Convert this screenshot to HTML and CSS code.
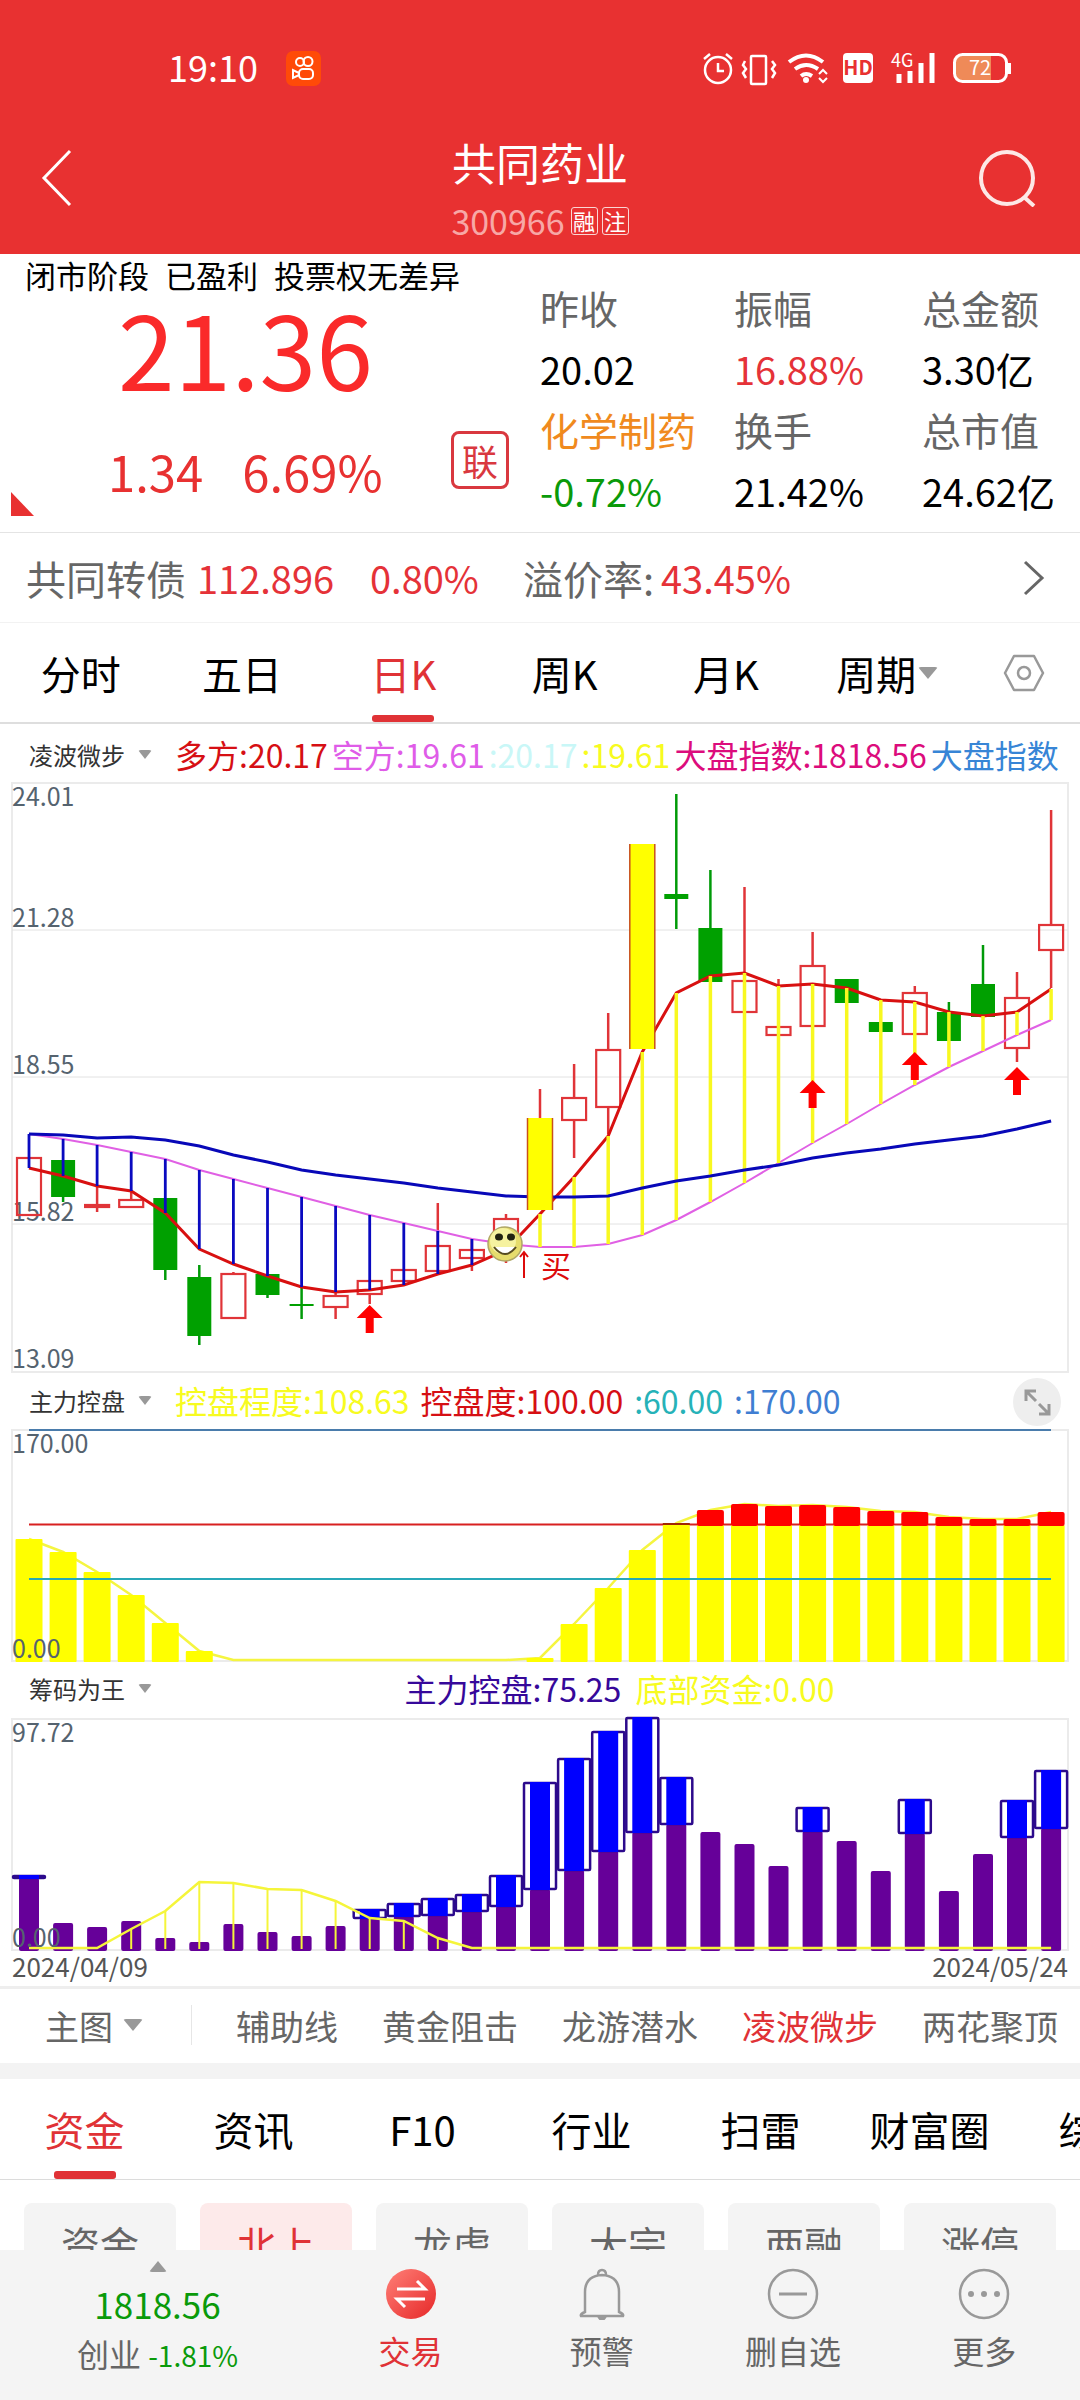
FILE: index.html
```html
<!DOCTYPE html>
<html lang="zh-CN">
<head>
<meta charset="utf-8">
<meta name="viewport" content="width=device-width">
<title>共同药业 300966</title>
<link rel="stylesheet" href="styles.css">
</head>
<body>
<div class="app">
  <header class="top">
    <div class="status">
      <span class="clock">19:10</span>
      <svg class="app-icon" width="35" height="35" viewBox="0 0 35 35" fill="none" stroke="#fff" stroke-width="2">
        <rect width="35" height="35" rx="7" fill="#ff4a08" stroke="none"/>
        <circle cx="14" cy="11" r="4"/><circle cx="22" cy="10.500" r="4.500"/>
        <rect x="13" y="18" width="14" height="10" rx="4"/><path d="M13 22L7 19v8l6-3"/>
      </svg>
      <span class="spacer"></span>
      <svg class="status-icons" width="310" height="34" viewBox="702 51 310 34" fill="none" stroke="#fff" stroke-width="2.500">
        <circle cx="718" cy="70" r="13"/><path d="M718 63v8h6M704 59l6-5M732 59l-6-5"/>
        <rect x="751" y="56" width="15" height="28" rx="1"/>
        <path d="M745 61l-2 4 3 4-3 4 3 5M772 61l3 4-3 4 3 4-3 5"/>
        <g stroke-width="4"><path d="M789 62q17-13 34 0M795 69q11-8 23 0M801 76q5-4 11 0"/></g>
        <circle cx="806" cy="80" r="3" fill="#fff" stroke="none"/>
        <path d="M819 74l4-4 4 4M819 78l4 4 4-4" stroke-width="2"/>
        <rect x="843" y="53" width="30" height="30" rx="4" fill="#fff" stroke="none"/>
        <text x="858" y="75" class="hd">HD</text>
        <text x="891" y="67" class="net">4G</text>
        <path d="M899 74v9M910 71v12M921 63v20M932 53v30" stroke-width="5"/>
        <path d="M961 56h30v25h-30q-6 0-6-6v-13q0-6 6-6z" fill="#ef8a58" stroke="none"/>
        <rect x="954.500" y="54.500" width="52" height="27" rx="8" stroke-width="3"/>
        <path d="M1009.500 63v11" stroke-width="3"/>
        <text x="969" y="75" class="bat">72</text>
      </svg>
    </div>
    <div class="title-bar">
      <button class="icon-btn" aria-label="返回"><svg width="32" height="58" viewBox="0 0 32 58" fill="none" stroke="#fff" stroke-width="3"><path d="M29 2L3 29l26 27"/></svg></button>
      <div class="titles">
        <h1>共同药业</h1>
        <p><span>300966</span><i>融</i><i>注</i></p>
      </div>
      <button class="icon-btn" aria-label="搜索"><svg width="60" height="58" viewBox="0 0 60 58" fill="none" stroke="#fde8e6" stroke-width="4"><circle cx="31" cy="29" r="26"/><path d="M48 48l10 9"/></svg></button>
    </div>
  </header>

  <main>
    <section class="quote">
      <div class="quote-main">
        <div class="phase"><span>闭市阶段</span><span>已盈利</span><span>投票权无差异</span></div>
        <div class="price">21.36</div>
        <div class="change"><span>1.34</span><span>6.69%</span><button class="link-badge">联</button></div>
        <span class="corner"></span>
      </div>
      <dl class="stats">
        <div><dt>昨收</dt><dd>20.02</dd></div>
        <div><dt>振幅</dt><dd class="up">16.88%</dd></div>
        <div><dt>总金额</dt><dd>3.30亿</dd></div>
        <div><dt class="sector">化学制药</dt><dd class="down">-0.72%</dd></div>
        <div><dt>换手</dt><dd>21.42%</dd></div>
        <div><dt>总市值</dt><dd>24.62亿</dd></div>
      </dl>
    </section>

    <a class="bond" href="#bond">
      <span>共同转债</span><b>112.896</b><b>0.80%</b><span>溢价率:</span><b>43.45%</b>
      <svg width="24" height="36" viewBox="0 0 24 36" fill="none" stroke="#666" stroke-width="3"><path d="M3 2l17 16L3 34"/></svg>
    </a>

    <nav class="periods">
      <button>分时</button><button>五日</button><button class="active">日K</button><button>周K</button><button>月K</button>
      <button>周期<span class="caret"></span></button>
      <button class="settings" aria-label="图表设置"><svg width="42" height="38" viewBox="0 0 42 38" fill="none" stroke="#999" stroke-width="2.500"><path d="M11 2h20l9 17-9 17H11L2 19z" stroke-linejoin="round"/><circle cx="21" cy="19" r="6"/></svg></button>
    </nav>

    <section class="charts">
      <div class="legend first">
        <button class="indicator">凌波微步<span class="caret small"></span></button>
        <div class="values tight"><span class="c-red">多方:20.17</span><span class="c-violet">空方:19.61</span><span class="c-pale">:20.17</span><span class="c-yellow">:19.61</span><span class="c-pink">大盘指数:1818.56</span><span class="c-blue">大盘指数</span></div>
      </div>
      <svg class="chart" id="candles" viewBox="0 0 1080 596" role="img" aria-label="日K线图"></svg>
      <div class="legend">
        <button class="indicator">主力控盘<span class="caret small"></span></button>
        <div class="values"><span class="c-yellow">控盘程度:108.63</span><span class="c-red">控盘度:100.00</span><span class="c-teal">:60.00</span><span class="c-steel">:170.00</span></div>
        <button class="expand" aria-label="全屏"><svg width="28" height="28" viewBox="0 0 28 28" fill="none" stroke="#999" stroke-width="3"><path d="M3 13V3h10M3 3l10 10M26 16v10H16M26 26L16 16"/></svg></button>
      </div>
      <svg class="chart" id="control" viewBox="0 0 1080 236" role="img" aria-label="主力控盘"></svg>
      <div class="legend">
        <button class="indicator">筹码为王<span class="caret small"></span></button>
        <div class="values centered"><span class="c-indigo">主力控盘:75.25</span><span class="c-yellow">底部资金:0.00</span></div>
      </div>
      <svg class="chart" id="chips" viewBox="0 0 1080 236" role="img" aria-label="筹码为王"></svg>
      <div class="dates"><span>2024/04/09</span><span>2024/05/24</span></div>
    </section>

    <nav class="overlays">
      <button class="menu">主图<span class="caret"></span></button>
      <button>辅助线</button><button>黄金阻击</button><button>龙游潜水</button><button class="active">凌波微步</button><button>两花聚顶</button>
    </nav>

    <nav class="sections">
      <button class="active">资金</button><button>资讯</button><button>F10</button><button>行业</button><button>扫雷</button><button>财富圈</button><button>综合</button>
    </nav>

    <div class="pills">
      <button>资金</button><button class="active">北上</button><button>龙虎</button><button>大宗</button><button>两融</button><button>涨停</button>
    </div>
  </main>

  <footer class="dock">
    <a class="index" href="#index"><span class="caret up-caret"></span><span class="idx-value">1818.56</span><span class="idx-change">创业 <em>-1.81%</em></span></a>
    <button class="trade"><svg width="52" height="52" viewBox="0 0 52 52" fill="none" stroke="#fff" stroke-width="3"><defs><linearGradient id="g" x1="0" y1="0" x2="1" y2="1"><stop offset="0" stop-color="#ff8078"/><stop offset="1" stop-color="#e62828"/></linearGradient></defs><circle cx="26" cy="26" r="25" fill="url(#g)" stroke="none"/><path d="M12 21h28l-8-8M40 31H12l8 8"/></svg>交易</button>
    <button><svg width="52" height="52" viewBox="0 0 52 52" fill="none" stroke="#999" stroke-width="2.500"><path d="M9 44q-5 2-4 4h42q1-2-4-4V24q0-16-17-17Q9 8 9 24z"/><path d="M22 7q0-5 4-5t4 5"/><path d="M23 49.500h6q-1 2-3 2t-3-2z" fill="#999"/></svg>预警</button>
    <button><svg width="52" height="52" viewBox="0 0 52 52" fill="none" stroke="#999" stroke-width="2.500"><circle cx="26" cy="26" r="24"/><path d="M12 26h28" stroke-width="3"/></svg>删自选</button>
    <button><svg width="52" height="52" viewBox="0 0 52 52" fill="none" stroke="#999" stroke-width="2.500"><circle cx="26" cy="26" r="24"/><g fill="#999" stroke="none"><circle cx="13" cy="26" r="3"/><circle cx="26" cy="26" r="3"/><circle cx="39" cy="26" r="3"/></g></svg>更多</button>
  </footer>
</div>
<script src="charts.js"></script>
</body>
</html>
```
FILE: styles.css
```css
* { box-sizing: border-box; margin: 0; padding: 0; }
body { background: #fff; color: #000; font-family: "Noto Sans CJK SC", "Noto Sans", sans-serif; }
button { border: 0; background: none; font: inherit; color: inherit; white-space: nowrap; }
a { color: inherit; text-decoration: none; }
i, em { font-style: normal; }
b { font-weight: 400; }
svg { display: block; flex: none; }

.app { display: flex; flex-direction: column; height: 100vh; overflow: hidden; }
main { flex: 1; min-height: 0; overflow: hidden; }

.top { background: #e83131; color: #fff; height: 254px; padding-top: 46px; flex: none; }
.status { display: flex; align-items: center; height: 44px; padding: 0 68px 0 168px; }
.status-icons { overflow: visible; }
.clock { font-size: 36px; line-height: 40px; padding-bottom: 4px; }
.app-icon { margin-left: 28px; }
.spacer { flex: 1; }
.hd { fill: #e83131; stroke: none; font-size: 20px; font-weight: 700; text-anchor: middle; }
.net { fill: #fff; stroke: none; font-size: 18px; }
.bat { fill: #fff; stroke: none; font-size: 20px; }
.title-bar { display: grid; grid-template-columns: 100px 1fr 100px; align-items: start; padding-top: 44px; }
.title-bar .icon-btn { display: flex; justify-content: center; padding-top: 15px; }
.title-bar .icon-btn:first-child { padding-left: 14px; }
.title-bar .icon-btn:last-child { padding-right: 48px; }
.titles { text-align: center; }
h1 { font-size: 44px; line-height: 56px; font-weight: 400; }
.titles p { display: flex; justify-content: center; align-items: center; gap: 4px; font-size: 34px; line-height: 62px; }
.titles p span { color: #f7a8a6; padding-right: 2px; }
.titles i { width: 27px; height: 28px; border: 1px solid #fbd5d3; border-radius: 3px; font-size: 22px; line-height: 25px; }

.quote { display: grid; grid-template-columns: 540px 1fr; height: 279px; border-bottom: 1px solid #e4e4e4; }
.quote-main { position: relative; color: #e83131; }
.phase { display: flex; gap: 16px; padding-left: 25px; color: #000; font-size: 31px; line-height: 41px; }
.price { padding-left: 118px; font-size: 102px; line-height: 104px; color: #fa2a2a; }
.change { display: flex; align-items: center; gap: 39px; height: 133px; padding: 10px 31px 0 108px; font-size: 49px; line-height: 60px; }
.link-badge { align-self: flex-start; margin: 22px 0 0 auto; width: 58px; height: 58px; border: 3px solid #d9383f; border-radius: 8px; color: #d9383f; font-size: 36px; line-height: 50px; }
.corner { position: absolute; left: 11px; bottom: 16px; border-left: 23px solid #e83131; border-top: 24px solid transparent; }
.stats { display: grid; grid-template-columns: 194px 188px 1fr; align-content: start; padding-top: 23px; font-size: 38px; line-height: 61px; white-space: nowrap; }
.stats dt { color: #666; font-size: 39px; }
.stats .sector { color: #f08a1e; }
.stats .up { color: #e53238; }
.stats .down { color: #0a9a0a; }

.bond { display: grid; grid-template-columns: 171px 173px 153px 138px 1fr 24px; align-items: center; height: 90px; padding: 0 34px 0 26px; border-bottom: 1px solid #f2f2f2; color: #666; font-size: 40px; white-space: nowrap; }
.bond b { color: #e53238; font-size: 38px; }

.periods { display: flex; height: 101px; border-bottom: 2px solid #dedede; font-size: 40px; }
.periods button { flex: 1; position: relative; display: flex; align-items: center; justify-content: center; }
.periods .settings { flex: 0 0 112px; }
.active { color: #e03236; }
.periods .active::after, .sections .active::after { content: ""; position: absolute; left: 50%; bottom: 0; width: 62px; height: 7px; margin-left: -31px; border-radius: 3px; background: #e03236; }
.caret { display: inline-block; margin-left: 2px; border: 10px solid transparent; border-top: 12px solid #999; border-bottom: 0; border-radius: 3px; }
.caret.small { margin-left: 13px; border-width: 9px 7px 0; }

.legend { display: flex; align-items: center; height: 52px; }
.legend.first { height: 56px; padding-top: 8px; }
.indicator { flex: none; display: flex; align-items: center; width: 175px; padding: 0 0 3px 29px; font-size: 24px; color: #333; }
.values { flex: 1; display: flex; gap: 11px; padding-bottom: 4px; font-size: 32px; line-height: 44px; white-space: nowrap; overflow: hidden; }
.values.tight { gap: 4px; }
.values.centered { justify-content: center; gap: 14px; padding-right: 16px; }
.c-red { color: #d60f14; }
.c-violet { color: #df5ce8; }
.c-pale { color: #c9f7f7; }
.c-yellow { color: #f7fb20; }
.c-pink { color: #dc0c7c; }
.c-blue { color: #3785d6; }
.c-teal { color: #26b2b8; }
.c-steel { color: #3f7ed2; }
.c-indigo { color: #36089a; }
.expand { flex: none; display: flex; align-items: center; justify-content: center; width: 48px; height: 48px; margin-right: 19px; border-radius: 50%; background: #eee; }
.chart { width: 100%; height: auto; }
.axis { font-size: 25px; fill: #55636f; }
.signal { font-size: 30px; fill: #dd0b0b; }
.dates { display: flex; justify-content: space-between; height: 34px; padding: 0 12px; font-size: 26px; line-height: 28px; color: #555; }

.overlays { display: flex; justify-content: space-between; align-items: center; height: 77px; padding: 0 22px 2px 45px; border-top: 3px solid #eee; font-size: 34px; color: #666; }
.overlays .menu { width: 147px; height: 40px; display: flex; align-items: center; border-right: 1px solid #e6e6e6; }
.overlays .menu .caret { margin-left: 10px; }
.overlays .active { color: #e03236; }

.sections { display: flex; height: 117px; border-top: 16px solid #f3f3f3; border-bottom: 1px solid #dcdcdc; font-size: 40px; overflow: hidden; }
.sections button { flex: 0 0 169px; position: relative; }
.sections .active::after { height: 8px; }
.pills { display: grid; grid-template-columns: repeat(6, 1fr); gap: 24px; padding: 23px 24px; font-size: 39px; color: #666; }
.pills button { height: 84px; padding-bottom: 4px; border-radius: 8px; background: #f4f4f4; }
.pills .active { background: #fdeaea; }

.dock { flex: none; display: grid; grid-template-columns: 315px repeat(4, 1fr); height: 150px; background: #f4f4f4; color: #666; font-size: 32px; }
.dock button { display: flex; flex-direction: column; align-items: center; gap: 10px; padding-top: 18px; line-height: 40px; }
.dock .trade { color: #e03236; }
.index { display: flex; flex-direction: column; align-items: center; padding-top: 11px; }
.up-caret { margin: 0; border: 9px solid transparent; border-top: 0; border-bottom: 11px solid #999; }
.idx-value { font-size: 35px; line-height: 44px; margin-top: 10px; color: #0a9a0a; }
.idx-change { line-height: 40px; margin-top: 7px; }
.idx-change em { color: #0a9a0a; font-size: 28px; }
```
FILE: charts.js
```js
// All series hold 31 trading days; vertical values are in viewBox units.
const DAYS = 31;
const xAt = i => 29 + i * 34.07;
const line = (pts, color, w) =>
  `<polyline fill="none" stroke="${color}" stroke-width="${w}" points="${pts.map((y, i) => xAt(i).toFixed(1) + ',' + y).join(' ')}"/>`;
const rect = (x, y, w, h, attrs) => `<rect x="${x.toFixed(1)}" y="${y}" width="${w}" height="${h}" ${attrs}/>`;
const seg = (x, y1, y2, color, w) => `<path d="M${x.toFixed(1)} ${y1}V${y2}" stroke="${color}" stroke-width="${w}"/>`;
const label = (y, text) => `<text class="axis" x="12" y="${y}">${text}</text>`;
const frame = (y, h) => rect(12, y, 1056, h, 'fill="none" stroke="#ebebeb" stroke-width="2"');

// [kind, high, body top, body bottom, low]
const candles = [
  ['r', 378, 378, 435, 436], ['g', 380, 380, 417, 422], ['r', 406, 425, 427, 432], ['r', 412, 420, 427, 428],
  ['g', 418, 418, 490, 500], ['g', 485, 497, 556, 565], ['r', 492, 494, 538, 538], ['g', 494, 494, 515, 518],
  ['g', 507, 524, 526, 539], ['r', 512, 516, 527, 539], ['r', 501, 501, 514, 524], ['r', 490, 490, 501, 505],
  ['r', 423, 466, 491, 491], ['r', 459, 470, 478, 491], ['r', 434, 439, 465, 483], ['y', 309, 338, 430, 430],
  ['r', 284, 318, 340, 378], ['r', 233, 270, 327, 354], ['y', 64, 64, 269, 269], ['g', 14, 114, 119, 149],
  ['g', 90, 148, 202, 202], ['r', 107, 201, 232, 232], ['r', 199, 247, 255, 255], ['r', 152, 186, 246, 246],
  ['g', 199, 199, 223, 223], ['g', 242, 242, 252, 252], ['r', 206, 213, 254, 254], ['g', 222, 232, 261, 261],
  ['g', 165, 204, 237, 237], ['r', 192, 218, 268, 282], ['r', 30, 145, 170, 208]
];
const fast = [388,396,406,411,433,469,484,496,507,512,510,505,494,485,470,434,397,356,272,213,196,193,206,204,208,220,222,232,236,232,209];
const slow = [354,359,365,372,379,390,399,408,417,426,435,443,451,459,464,467,467,464,455,440,422,403,383,363,344,324,305,287,271,255,240];
const market = [354,355,358,357,360,366,375,382,390,395,399,403,408,412,416,417,417,416,408,401,396,390,385,378,373,369,364,360,356,349,341];

function drawCandles() {
  let s = frame(3, 589);
  [150, 297, 444].forEach(y => { s += `<path d="M12 ${y}H1068" stroke="#e2e2e2" stroke-width="1"/>`; });
  [[26, '24.01'], [147, '21.28'], [294, '18.55'], [441, '15.82'], [588, '13.09']].forEach(a => { s += label(...a); });
  candles.forEach(([kind, high, top, bottom, low], i) => {
    const x = xAt(i);
    const color = kind === 'g' ? '#009a08' : '#e03438';
    s += seg(x, high, top, color, 2.5) + seg(x, bottom, low, color, 2.5);
    if (kind === 'g') s += rect(x - 12, top, 24, bottom - top, 'fill="#00a000"');
    else if (kind === 'r') s += rect(x - 12, top, 24, bottom - top, 'fill="none" stroke="#e03438" stroke-width="2.2"');
  });
  s += line(slow, '#e060e4', 2) + line(fast, '#d81010', 3);
  for (let i = 0; i < DAYS; i++) {
    if (i < 14) s += seg(xAt(i), slow[i], fast[i], '#0a0ac0', 2.8);
    if (i > 14) s += seg(xAt(i), fast[i], slow[i], '#f8f820', 3.5);
  }
  s += line(market, '#0808b8', 3);
  candles.forEach(([kind, , top, bottom], i) => {
    if (kind === 'y') s += rect(xAt(i) - 12.5, top, 25, bottom - top, 'fill="#ffff00"')
      + seg(xAt(i) - 12.5, top, bottom, '#c8501c', 1.5) + seg(xAt(i) + 12.5, top, bottom, '#c8501c', 1.5);
  });
  [[10, 525], [23, 300], [26, 272], [29, 287]].forEach(([i, y]) => {
    s += `<path fill="#ff0000" d="M${xAt(i).toFixed(1)} ${y}l13 13h-9v15h-8v-15h-9z"/>`;
  });
  s += '<path d="M524 498V472M520 477l4-5 4 5" fill="none" stroke="#dd0b0b" stroke-width="2"/>';
  s += '<text class="signal" x="541" y="497">买</text>';
  s += '<circle cx="505" cy="464" r="17" fill="#e6dc6c" stroke="#b0a868" stroke-width="1.5"/><circle cx="503" cy="461" r="13" fill="#f6f2a0"/>'
    + '<ellipse cx="499" cy="457" rx="4" ry="3.5" fill="#221"/><ellipse cx="511" cy="457" rx="4" ry="3.5" fill="#221"/>'
    + '<path d="M494 467q11 14 22 0" fill="#fff" stroke="#554a20" stroke-width="2"/>';
  document.getElementById('candles').innerHTML = s;
}

const control = [111,124,144,167,195,223,232,232,232,232,232,232,232,232,232,230,196,160,122,95,82,76,78,77,79,83,84,89,91,91,84];

function drawControl() {
  let s = frame(2, 231) + line(control, '#f5f540', 2.5);
  s += '<path d="M29 96.500H1051" stroke="#d82020" stroke-width="2"/>';
  control.forEach((y, i) => {
    const x = xAt(i) - 13.5;
    if (y < 232) s += rect(x, Math.max(y, 97), 27, 234 - Math.max(y, 97), 'rx="1" fill="#ffff00"');
    if (y < 95) s += rect(x, y, 27, 98 - y, 'rx="2" fill="#ff0000"');
    else if (y === 95) s += rect(x, y, 27, 2, 'fill="#a02800"');
  });
  s += '<path d="M29 2H1051" stroke="#4a7cac" stroke-width="2"/><path d="M29 151H1051" stroke="#28a8b8" stroke-width="2"/>';
  s += label(25, '170.00') + label(230, '0.00');
  document.getElementById('control').innerHTML = s;
}

// [top] for a plain bar, [top, split] when the upper part is highlighted
const chipBars = [[160,162],[207],[211],[205],[222],[226],[208],[216],[220],[210],[194,202],[188,200],[183,199],[179,195],[160,190],[67,173],
  [43,154],[16,135],[2,116],[62,108],[116],[128],[150],[92,115],[125],[155],[84,117],[175],[138],[85,121],[55,112]];
const bottomFund = [232,232,232,213,195,166,167,173,174,185,202,205,222].concat(Array(18).fill(232));

function drawChips() {
  let s = frame(3, 231);
  s += label(26, '97.72');
  chipBars.forEach(([top, split], i) => {
    const x = xAt(i);
    s += rect(x - 10, split || top, 20, 235 - (split || top), 'rx="2" fill="#660099"');
    if (split) {
      s += rect(x - 16, top, 32, split - top, 'rx="1" fill="none" stroke="#2c0a8c" stroke-width="2.5"');
      s += rect(x - 10, top - 1, 20, split - top + 2, 'fill="#0000ff"');
    }
  });
  s += line(bottomFund, '#f5f53a', 2.5);
  bottomFund.forEach((y, i) => { if (y < 232) s += seg(xAt(i), y, 233, '#f5f53a', 2); });
  s += label(231, '0.00');
  document.getElementById('chips').innerHTML = s;
}

drawCandles();
drawControl();
drawChips();
```
